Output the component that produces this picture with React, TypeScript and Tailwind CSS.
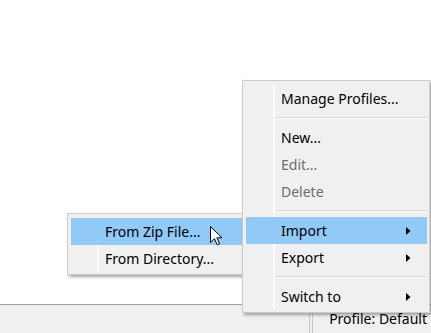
import React from 'react';

const font = { fontFamily: '"Noto Sans", "Open Sans", sans-serif' };

type Item =
  | { kind: 'item'; label: string; disabled?: boolean; sub?: boolean; active?: boolean }
  | { kind: 'sep' };

const mainItems: Item[] = [
  { kind: 'item', label: 'Manage Profiles...' },
  { kind: 'sep' },
  { kind: 'item', label: 'New...' },
  { kind: 'item', label: 'Edit...', disabled: true },
  { kind: 'item', label: 'Delete', disabled: true },
  { kind: 'sep' },
  { kind: 'item', label: 'Import', sub: true, active: true },
  { kind: 'item', label: 'Export', sub: true },
  { kind: 'sep' },
  { kind: 'item', label: 'Switch to', sub: true },
];

function Arrow() {
  return (
    <svg width="5" height="8" viewBox="0 0 5 8" className="shrink-0">
      <path d="M0 0 L4.5 4 L0 8 Z" fill="#000" />
    </svg>
  );
}

function MenuRow({ label, disabled, sub, active, gutter }: { label: string; disabled?: boolean; sub?: boolean; active?: boolean; gutter: number }) {
  return (
    <div className={`relative flex h-[27px] items-center ${active ? 'bg-[#91c9f7]' : ''}`}>
      <div style={{ width: gutter }} className="h-full shrink-0" />
      <span className={`flex-1 text-[14px] leading-none ${disabled ? 'text-[#6d6d6d]' : 'text-black'}`}>{label}</span>
      {sub && (
        <div className="mr-[16px] flex items-center">
          <Arrow />
        </div>
      )}
    </div>
  );
}

function Separator({ gutter }: { gutter: number }) {
  return (
    <div className="flex h-[12px]">
      <div style={{ width: gutter - 6 }} className="shrink-0" />
      <div className="flex-1 pt-[5px]">
        <div className="h-px bg-[#d7d7d7]" />
        <div className="h-px bg-[#fcfcfc]" />
      </div>
    </div>
  );
}

function MainMenu() {
  return (
    <div className="absolute left-[242px] top-[80px] w-[188px] border border-[#cccccc] bg-[#f0f0f0] pl-[3px] pr-[2px] pt-[4px] pb-[2px] shadow-[2px_2px_3px_rgba(0,0,0,0.35)]">
      <div className="absolute bottom-[3px] left-[30px] top-[4px] w-[2px] bg-[#fcfcfc]" />
      {mainItems.map((it, i) =>
        it.kind === 'sep' ? (
          <Separator key={i} gutter={35} />
        ) : (
          <MenuRow key={i} gutter={35} label={it.label} disabled={it.disabled} sub={it.sub} active={it.active} />
        )
      )}
    </div>
  );
}

function SubMenu() {
  return (
    <div className="absolute left-[67px] top-[213px] w-[179px] border border-[#cccccc] bg-[#f0f0f0] px-[3px] pt-[4px] pb-[2px] shadow-[2px_2px_3px_rgba(0,0,0,0.35)]">
      <div className="absolute bottom-[3px] left-[29px] top-[4px] w-[2px] bg-[#fcfcfc]" />
      <MenuRow gutter={34} label="From Zip File..." active />
      <MenuRow gutter={34} label="From Directory..." />
    </div>
  );
}

function Cursor() {
  return (
    <svg className="absolute left-[210px] top-[226px]" width="13" height="20" viewBox="0 0 13 20">
      <path
        d="M0.5 0.5 L0.5 16.5 L4.5 12.7 L7.2 18.8 L9.5 17.8 L6.9 11.8 L12 11.8 Z"
        fill="#fff"
        stroke="#000"
        strokeWidth="1"
        strokeLinejoin="miter"
      />
    </svg>
  );
}

export default function App() {
  return (
    <div className="relative flex h-[333px] w-[431px] flex-col overflow-hidden bg-white" style={font}>
      <div className="flex-1 border-b border-[#a0a0a0] bg-white" />
      <div className="flex h-[28px] items-center bg-[#f0f0f0]">
        <div className="flex-1" />
        <div className="flex h-full items-end">
          <div className="flex h-[25px] w-[5px] gap-[2px]">
            <div className="w-px bg-[#c9c9c9]" />
            <div className="w-px bg-[#c9c9c9]" />
          </div>
        </div>
        <span className="ml-[15px] shrink-0 whitespace-nowrap pr-[4px] text-[14px] leading-none text-black">Profile: Default</span>
      </div>
      <SubMenu />
      <MainMenu />
      <Cursor />
    </div>
  );
}
